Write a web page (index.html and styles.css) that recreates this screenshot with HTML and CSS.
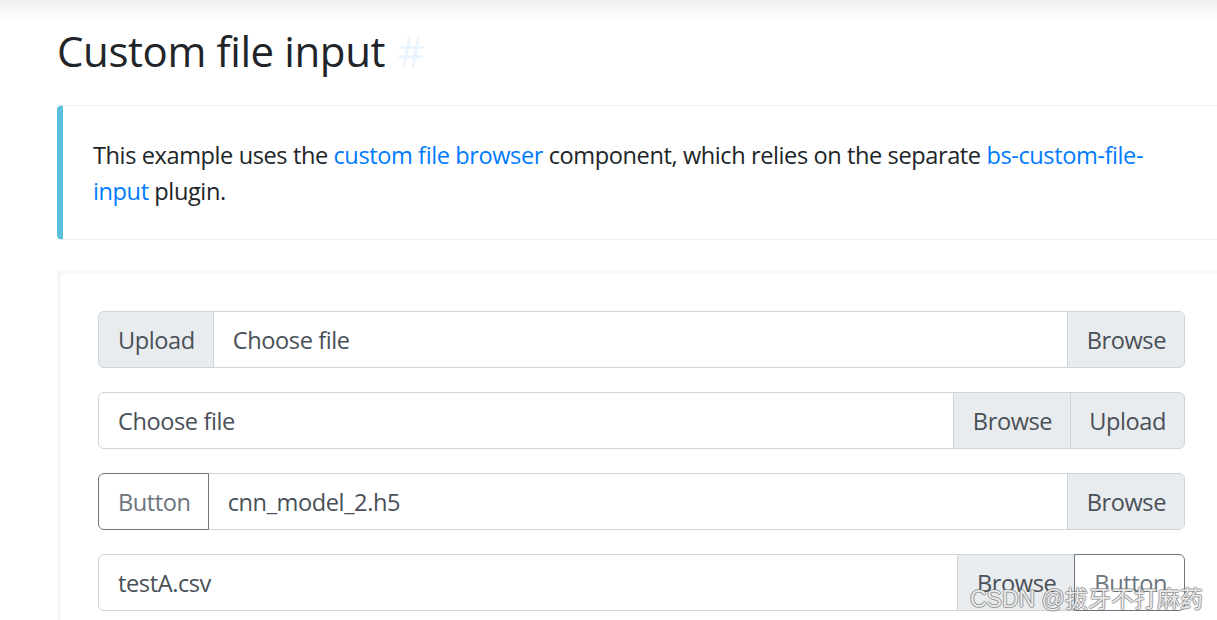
FILE: index.html
```html
<!DOCTYPE html>
<html lang="en">
<head>
<meta charset="utf-8">
<title>Custom file input</title>
<link rel="stylesheet" href="styles.css">
</head>
<body>
<div class="topshade"></div>
<main class="content">
  <h2 class="title">Custom file input <a class="anchor" href="#">#</a></h2>
  <div class="callout">
    <p>This example uses the <a href="#">custom file browser</a> component, which relies on the separate <a href="#">bs-custom-file-input</a> plugin.</p>
  </div>
  <div class="example">
    <div class="group">
      <span class="addon first">Upload</span>
      <label class="file last"><span class="fname">Choose file</span><span class="browse">Browse</span></label>
    </div>
    <div class="group">
      <label class="file first"><span class="fname">Choose file</span><span class="browse">Browse</span></label>
      <span class="addon last">Upload</span>
    </div>
    <div class="group">
      <button class="btn first">Button</button>
      <label class="file last"><span class="fname">cnn_model_2.h5</span><span class="browse">Browse</span></label>
    </div>
    <div class="group">
      <label class="file first"><span class="fname">testA.csv</span><span class="browse">Browse</span></label>
      <button class="btn last">Button</button>
    </div>
  </div>
</main>
<div class="watermark">CSDN @拔牙不打麻药</div>
</body>
</html>
```
FILE: styles.css
```css
html, body {
  margin: 0;
  padding: 0;
  overflow: hidden;
  background: #fff;
}
body {
  font-family: "Open Sans", "Noto Sans", sans-serif;
  color: #212529;
  font-size: 23.6px;
  line-height: 1.5;
  letter-spacing: -0.42px;
  position: relative;
  height: 620px;
}
.topshade {
  height: 22px;
  background: linear-gradient(#f1f1f1, #ffffff);
}
.content {
  margin-left: 57px;
  width: 1169px;
}
.title {
  margin: 4px 0 29px 0;
  font-size: 42px;
  font-weight: 500;
  line-height: 1.2;
  letter-spacing: -0.4px;
  color: #212529;
}
.anchor {
  color: #007bff;
  opacity: 0.08;
  text-decoration: none;
  font-weight: 400;
  padding-left: 2px;
}
.callout {
  border: 1px solid #eeeeee;
  border-left: 6px solid #5bc0de;
  border-radius: 5px;
  padding: 32px 30px 30px 30px;
  margin-bottom: 30px;
}
.callout p {
  margin: 0;
}
.callout a {
  color: #007bff;
  text-decoration: none;
}
.example {
  border: 4px solid #f7f7f9;
  padding: 37px 37px 0 37px;
}
.group {
  display: flex;
  height: 57px;
  margin-bottom: 24px;
  color: #495057;
}
.group > * + * {
  margin-left: -1px;
}
.addon {
  display: flex;
  align-items: center;
  padding: 2px 18px 0 18px;
  background: #e9ecef;
  border: 1px solid #ced4da;
}
.group > .addon.first {
  padding-left: 19px;
}
.file {
  flex: 1;
  display: flex;
  align-items: stretch;
  border: 1px solid #ced4da;
  background: #fff;
  overflow: hidden;
}
.fname {
  flex: 1;
  display: flex;
  align-items: center;
  padding: 2px 0 0 19px;
}
.browse {
  display: flex;
  align-items: center;
  padding: 2px 18px 0 19px;
  background: #e9ecef;
  border-left: 1px solid #ced4da;
}
.btn {
  font: inherit;
  letter-spacing: inherit;
  color: #6c757d;
  background: #fff;
  border: 1px solid #6c757d;
  padding: 2px 17px 0 19px;
  position: relative;
  z-index: 1;
}
.first {
  border-radius: 6px 0 0 6px;
}
.last {
  border-radius: 0 6px 6px 0;
}
.watermark {
  position: absolute;
  z-index: 10;
  left: 970px;
  top: 582px;
  font-family: "Liberation Sans", "Noto Sans CJK SC", sans-serif;
  font-size: 23px;
  letter-spacing: 0;
  color: rgba(255, 255, 255, 0.85);
  text-shadow: 1px 0 0 rgba(110,110,110,0.6), -1px 0 0 rgba(110,110,110,0.6), 0 1px 0 rgba(110,110,110,0.6), 0 -1px 0 rgba(110,110,110,0.6);
  white-space: nowrap;
}
```
